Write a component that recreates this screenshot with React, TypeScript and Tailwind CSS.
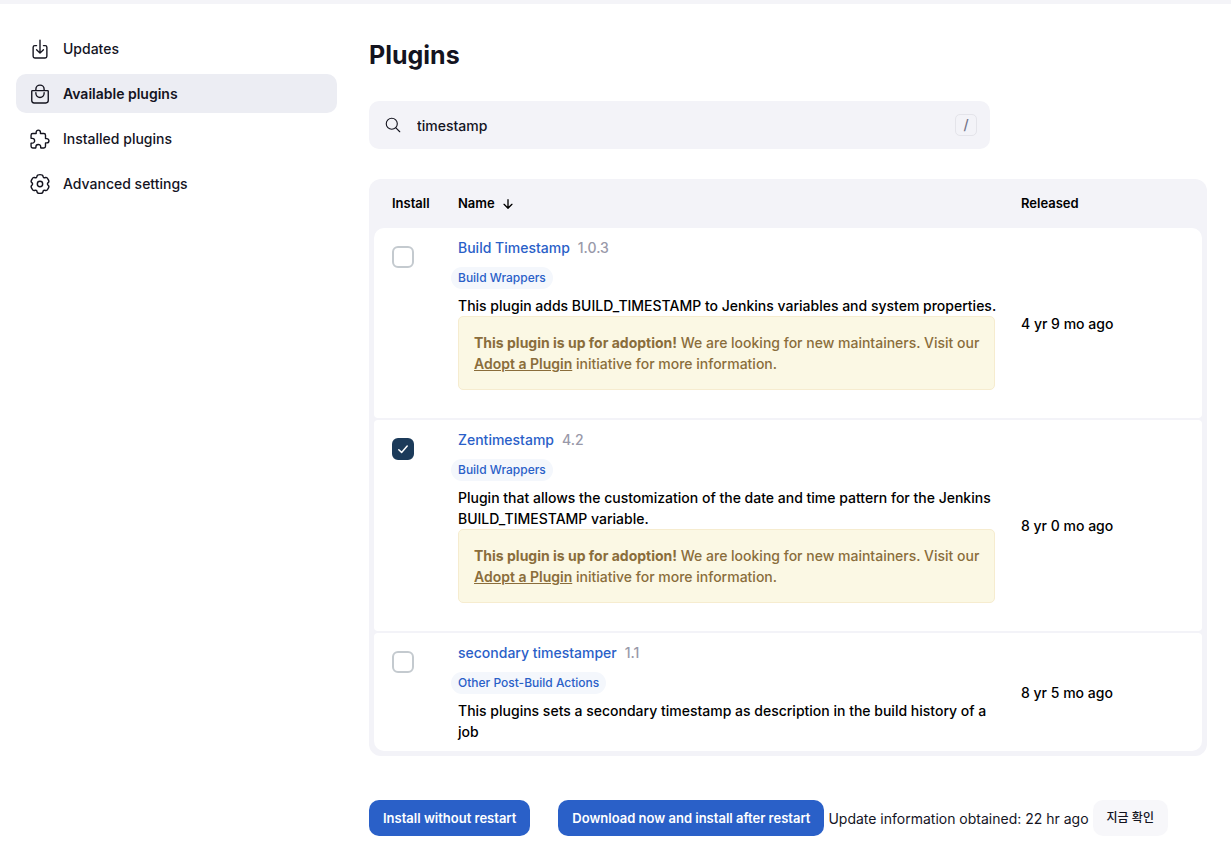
import { useState } from "react";
import type { ComponentType, ReactNode, SVGProps } from "react";
import {
  IoArrowDown,
  IoBagHandleOutline,
  IoDownloadOutline,
  IoExtensionPuzzleOutline,
  IoSearchOutline,
} from "react-icons/io5";

/** Closed curve with six soft teeth, centred on the origin. */
function gearOutline(): string {
  const points: [number, number][] = [];
  for (let tooth = 0; tooth < 6; tooth++) {
    const centre = tooth * 60 - 90;
    const corners: [number, number][] = [
      [centre - 16, 10.2],
      [centre + 16, 10.2],
      [centre + 24, 7.8],
      [centre + 36, 7.8],
    ];
    for (const [degrees, radius] of corners) {
      const angle = (degrees * Math.PI) / 180;
      points.push([radius * Math.cos(angle), radius * Math.sin(angle)]);
    }
  }
  const middle = (i: number) => {
    const [ax, ay] = points[i % points.length];
    const [bx, by] = points[(i + 1) % points.length];
    return `${((ax + bx) / 2).toFixed(2)} ${((ay + by) / 2).toFixed(2)}`;
  };
  const curves = points.map((_, i) => {
    const [x, y] = points[(i + 1) % points.length];
    return `Q${x.toFixed(2)} ${y.toFixed(2)} ${middle(i + 1)}`;
  });
  return `M${middle(0)}${curves.join("")}Z`;
}

const gearPath = gearOutline();

function GearIcon(props: SVGProps<SVGSVGElement>) {
  return (
    <svg viewBox="-11.5 -11.5 23 23" fill="none" stroke="currentColor" strokeWidth="1.5" {...props}>
      <path d={gearPath} />
      <circle r="2.8" />
    </svg>
  );
}

type NavItem = { label: string; icon: ComponentType<{ className?: string }>; active?: boolean };

const navItems: NavItem[] = [
  { label: "Updates", icon: IoDownloadOutline },
  { label: "Available plugins", icon: IoBagHandleOutline, active: true },
  { label: "Installed plugins", icon: IoExtensionPuzzleOutline },
  { label: "Advanced settings", icon: GearIcon },
];

type Plugin = {
  id: string;
  name: string;
  version: string;
  tag: string;
  description: string;
  adoption: boolean;
  released: string;
  selected: boolean;
};

const plugins: Plugin[] = [
  {
    id: "build-timestamp",
    name: "Build Timestamp",
    version: "1.0.3",
    tag: "Build Wrappers",
    description: "This plugin adds BUILD_TIMESTAMP to Jenkins variables and system properties.",
    adoption: true,
    released: "4 yr 9 mo ago",
    selected: false,
  },
  {
    id: "zentimestamp",
    name: "Zentimestamp",
    version: "4.2",
    tag: "Build Wrappers",
    description:
      "Plugin that allows the customization of the date and time pattern for the Jenkins BUILD_TIMESTAMP variable.",
    adoption: true,
    released: "8 yr 0 mo ago",
    selected: true,
  },
  {
    id: "secondary-timestamper",
    name: "secondary timestamper",
    version: "1.1",
    tag: "Other Post-Build Actions",
    description: "This plugins sets a secondary timestamp as description in the build history of a job",
    adoption: false,
    released: "8 yr 5 mo ago",
    selected: false,
  },
];

function Sidebar() {
  return (
    <nav aria-label="Plugin manager" className="flex w-[321px] shrink-0 flex-col gap-1.5">
      {navItems.map(({ label, icon: Icon, active }) => (
        <a
          key={label}
          href="#"
          aria-current={active ? "page" : undefined}
          className={
            active
              ? "flex h-[39px] items-center gap-3 rounded-[10px] bg-[#ecedf3] px-[13px] font-semibold"
              : "flex h-[39px] items-center gap-3 rounded-[10px] px-[13px]"
          }
        >
          <Icon className="size-[22px] shrink-0" />
          {label}
        </a>
      ))}
    </nav>
  );
}

function SearchBox() {
  return (
    <label className="mt-[30px] flex h-12 w-full max-w-[621px] items-center rounded-[10px] bg-[#f3f3f8] pr-[13px] pl-[15px]">
      <IoSearchOutline className="size-[18px] shrink-0" aria-hidden="true" />
      <input
        type="search"
        aria-label="Search available plugins"
        defaultValue="timestamp"
        className="ml-[15px] min-w-0 flex-1 bg-transparent font-medium outline-none"
      />
      <kbd className="flex size-[22px] items-center justify-center rounded-[5px] border border-[#e4e4ea] font-[Inter,sans-serif] text-sm text-[#737388]">
        /
      </kbd>
    </label>
  );
}

function PluginRow({ plugin }: { plugin: Plugin }) {
  const [checked, setChecked] = useState(plugin.selected);
  return (
    <tr className="align-top text-black">
      <td className="rounded-l-[4px] bg-white pt-[18px] pl-[18px]">
        <span className="relative block size-[22px]">
          <input
            type="checkbox"
            aria-label={"Install " + plugin.name}
            checked={checked}
            onChange={(event) => setChecked(event.target.checked)}
            className="block size-[22px] appearance-none rounded-[6px] border-2 border-[#c4cacf] bg-white checked:border-[#1c3b5a] checked:bg-[#1c3b5a]"
          />
          {checked && (
            <svg viewBox="0 0 22 22" className="pointer-events-none absolute inset-0 size-[22px]" aria-hidden="true">
              <path
                d="M6.8 11.8 9.6 14.4 15.2 8"
                fill="none"
                stroke="white"
                strokeWidth="1.5"
                strokeLinecap="round"
                strokeLinejoin="round"
              />
            </svg>
          )}
        </span>
      </td>
      <td className="bg-white py-[9px] pr-5">
        <div className="flex gap-2">
          <a href="#" className="text-[#2a60c8]">
            {plugin.name}
          </a>
          <span className="text-[#9999a9]">{plugin.version}</span>
        </div>
        <div className="mt-[9px] -ml-[7px] flex">
          <a
            href="#"
            className="flex h-[22px] items-center rounded-full bg-[#f4f7fc] px-[7px] text-xs text-[#2a60c8]"
          >
            {plugin.tag}
          </a>
        </div>
        <p className="mt-1.5">{plugin.description}</p>
        {plugin.adoption && (
          <div className="mr-1.5 mb-[19px] rounded-[5px] border border-[#f6eccf] bg-[#fbf8e4] py-[15px] pr-2.5 pl-[15px] text-[#8a6d3b]">
            <strong className="font-bold">This plugin is up for adoption!</strong> We are looking for new maintainers.
            Visit our{" "}
            <a href="#" className="font-semibold underline">
              Adopt a Plugin
            </a>{" "}
            initiative for more information.
          </div>
        )}
      </td>
      <td className="rounded-r-[4px] bg-white align-middle">{plugin.released}</td>
    </tr>
  );
}

function PluginTable() {
  return (
    <div className="mt-[30px] overflow-hidden rounded-xl bg-[#f3f3f8] px-[5px] pb-[3px]">
      <table className="w-full table-fixed border-separate border-spacing-x-0 border-spacing-y-[2px]">
        <thead>
          <tr className="h-[45px] text-left text-[13px] text-black">
            <th scope="col" className="w-[84px] pl-[18px] font-semibold">
              Install
            </th>
            <th scope="col" className="font-semibold">
              <button type="button" className="flex items-center gap-1.5 font-semibold">
                Name
                <IoArrowDown className="size-3.5" aria-hidden="true" />
              </button>
            </th>
            <th scope="col" className="w-[181px] font-semibold">
              Released
            </th>
          </tr>
        </thead>
        <tbody className="[&>tr:first-child>td:first-child]:rounded-tl-[10px] [&>tr:first-child>td:last-child]:rounded-tr-[10px] [&>tr:last-child>td:first-child]:rounded-bl-[10px] [&>tr:last-child>td:last-child]:rounded-br-[10px]">
          {plugins.map((plugin) => (
            <PluginRow key={plugin.id} plugin={plugin} />
          ))}
        </tbody>
      </table>
    </div>
  );
}

function PrimaryButton({ children }: { children: ReactNode }) {
  return (
    <button
      type="button"
      className="h-9 rounded-[10px] bg-[#2a60c8] px-3.5 text-[13px] font-semibold whitespace-nowrap text-white"
    >
      {children}
    </button>
  );
}

function ActionBar() {
  return (
    <div className="mt-11 flex flex-wrap items-center gap-1">
      <div className="flex gap-7">
        <PrimaryButton>Install without restart</PrimaryButton>
        <PrimaryButton>Download now and install after restart</PrimaryButton>
      </div>
      <span className="font-normal">Update information obtained: 22 hr ago</span>
      <button
        type="button"
        className="h-9 rounded-[10px] bg-[#f7f7fa] px-3.5 text-xs font-medium whitespace-nowrap"
      >
        지금 확인
      </button>
    </div>
  );
}

export default function App() {
  return (
    <div className="min-h-screen border-t-4 border-[#f4f4f8] bg-white font-[Inter,'Noto_Sans_CJK_KR',sans-serif] text-sm leading-[21px] font-medium text-[#14141f]">
      <div className="flex gap-8 pt-[25px] pr-6 pl-4">
        <Sidebar />
        <main className="min-w-0 flex-1 pt-2.5">
          <h1 className="text-[25px] leading-8 font-bold">Plugins</h1>
          <SearchBox />
          <PluginTable />
          <ActionBar />
        </main>
      </div>
    </div>
  );
}
